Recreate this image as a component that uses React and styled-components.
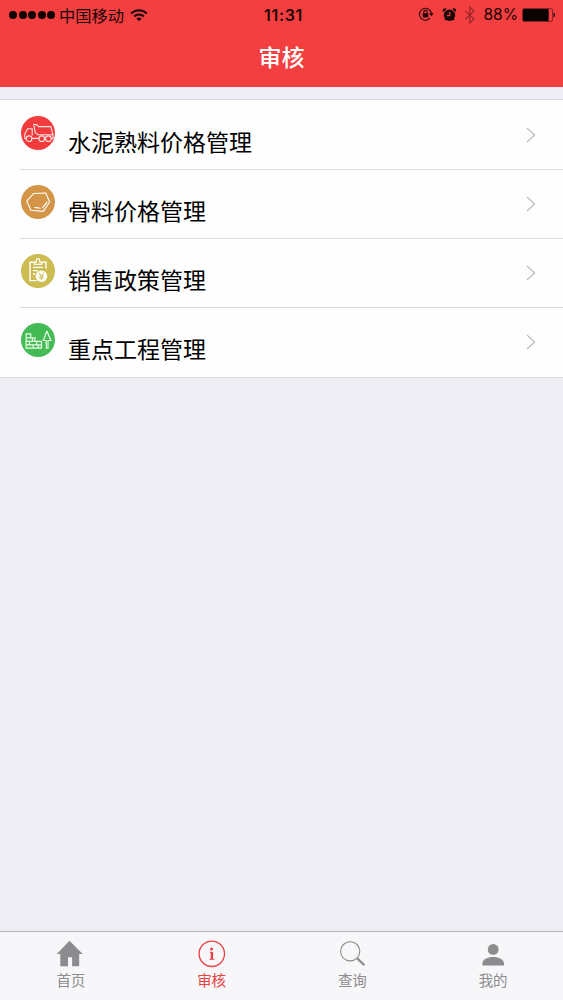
import React from "react";
import styled, { createGlobalStyle } from "styled-components";

const MENU = [
  { name: "水泥熟料价格管理", color: "#f13b3c", icon: <TruckIcon /> },
  { name: "骨料价格管理", color: "#d49548", icon: <StoneIcon /> },
  { name: "销售政策管理", color: "#cdbc51", icon: <PolicyIcon /> },
  { name: "重点工程管理", color: "#45bb55", icon: <ProjectIcon /> },
];

const TABS = [
  { name: "首页", icon: <HomeIcon /> },
  { name: "审核", icon: <InfoIcon />, active: true },
  { name: "查询", icon: <SearchIcon /> },
  { name: "我的", icon: <UserIcon /> },
];

const App = () => {
  return (
    <React.Fragment>
      <GlobalStyle />
      <Page>
        <Header>
          <StatusBar>
            <StatusLeft>
              <Signal>
                <Dot /><Dot /><Dot /><Dot /><Dot />
              </Signal>
              <Carrier>中国移动</Carrier>
              <WifiIcon />
            </StatusLeft>
            <Clock>11:31</Clock>
            <StatusRight>
              <LockIcon />
              <AlarmIcon />
              <BluetoothIcon />
              <Percent>88%</Percent>
              <BatteryIcon />
            </StatusRight>
          </StatusBar>
          <Title>审核</Title>
        </Header>
        <List>
          {MENU.map((item) => (
            <Row key={item.name}>
              <Round $color={item.color}>{item.icon}</Round>
              <RowBody>
                <RowName>{item.name}</RowName>
                <ArrowIcon />
              </RowBody>
            </Row>
          ))}
        </List>
        <TabBar>
          {TABS.map((tab) => (
            <Tab key={tab.name} $active={tab.active}>
              <TabIcon>{tab.icon}</TabIcon>
              <TabName>{tab.name}</TabName>
            </Tab>
          ))}
        </TabBar>
      </Page>
    </React.Fragment>
  );
};

// status bar icons

function WifiIcon() {
  return (
    <svg width="18" height="14" viewBox="0 0 18 14" fill="none" stroke="#1b0606" strokeWidth="2.1">
      <path d="M1.2 5.4C5.6 1.1 12.4 1.1 16.8 5.4" />
      <path d="M4.2 8.4C6.9 5.8 11.1 5.8 13.8 8.4" />
      <path d="M9 13.2 6.4 10.5C7.8 9.1 10.2 9.1 11.6 10.5Z" fill="#1b0606" stroke="none" />
    </svg>
  );
}

function LockIcon() {
  return (
    <svg width="16" height="15" viewBox="0 0 16 15" fill="none" stroke="#250707" strokeWidth="1.1">
      <path d="M12 11.2A6 6 0 1 1 13.4 6.6" />
      <path d="M11.1 6.2H15.7L13.4 9.2Z" fill="#250707" stroke="none" />
      <rect x="4.7" y="6.2" width="5.6" height="4.3" rx=".4" fill="#250707" stroke="none" />
      <path d="M5.8 6.5V5.1A1.7 1.7 0 0 1 9.2 5.1V6.5" />
    </svg>
  );
}

function AlarmIcon() {
  return (
    <svg width="14" height="14" viewBox="0 0 14 14" fill="#1b0606">
      <circle cx="7.5" cy="7.3" r="5.7" />
      <path d="M1.3 4A2.2 2.2 0 0 1 4.7 1.1ZM13.7 4A2.2 2.2 0 0 0 10.3 1.1Z" />
      <path d="M3.8 10.6 3 12.3M11.2 10.6 12 12.3" stroke="#1b0606" strokeWidth="1.2" />
      <path d="M7.7 3.9V7.7H4.8" fill="none" stroke="#f33f40" strokeWidth="1.3" />
    </svg>
  );
}

function BluetoothIcon() {
  return (
    <svg width="11" height="18" viewBox="0 0 11 18" fill="none" stroke="#9b2527" strokeWidth="1.2">
      <path d="M1.2 4.8 10.2 13 5.8 16.8V1.2L10.2 5 1.2 13.2" />
    </svg>
  );
}

function BatteryIcon() {
  return (
    <svg width="34" height="14" viewBox="0 0 34 14">
      <rect x=".5" y=".5" width="30" height="13" rx="1.8" fill="none" stroke="#7d1d1e" strokeWidth=".9" />
      <rect x="1" y="1" width="25.7" height="12" rx="1" fill="#080101" />
      <path d="M31.5 4.6C33.6 5.2 33.6 8.8 31.5 9.4Z" fill="#250707" />
    </svg>
  );
}

// list icons

function TruckIcon() {
  return (
    <svg width="34" height="34" viewBox="0 0 34 34" fill="none" stroke="#ffe3e3" strokeWidth="1.1">
      <path d="M5.2 22.4H3.8V18L6.6 12.7H11.2V19.4M12 8.6H15.6L17.6 10.6H29.8L32 18.7M13 9.6 14.3 16.8 17 18.7H32V22.4H30.4M11 22.4H17.8" />
      <circle cx="8.1" cy="22.7" r="2.8" />
      <circle cx="20.8" cy="22.7" r="2.8" />
      <circle cx="27.4" cy="22.7" r="2.8" />
    </svg>
  );
}

function StoneIcon() {
  return (
    <svg width="34" height="34" viewBox="0 0 34 34" fill="none" stroke="#fff" strokeWidth="1.1">
      <path d="M12.6 8.5 24.8 8 28.6 17 22.2 26.4 9.9 25.3 5.8 16.1Z" />
      <path d="M26.2 16.7 21.4 23.2M19.6 23.2 13.5 22.4" />
    </svg>
  );
}

function PolicyIcon() {
  return (
    <svg width="34" height="34" viewBox="0 0 34 34" fill="none" stroke="#fff" strokeWidth="1.4">
      <path d="M13 8.2H9V26.6H15.5M21.2 8.2H25V14.5" />
      <path d="M13.4 10.3V8.1H15.3V6.4A1.7 1.7 0 0 1 18.7 6.4V8.1H20.6V10.3Z" strokeWidth="1.2" />
      <path d="M12 13.4H22.2M12 16.6H17M12 20H14" />
      <circle cx="20.4" cy="22.2" r="5.8" fill="#fff" stroke="none" />
      <path d="M17.8 18.7 20.4 22 23 18.7M20.4 21.8V26M18 22.2H22.8M18 24.2H22.8" stroke="#cdbc51" strokeWidth="1" />
    </svg>
  );
}

function ProjectIcon() {
  return (
    <svg width="34" height="34" viewBox="0 0 34 34" fill="none" stroke="#e9ffe8" strokeWidth="1.15">
      <path d="M5.1 10.9H9.7V14.9H14V18.4H20.5V25.1H5.1ZM5.1 14.9H9.7M5.1 18.4H14M5.1 21.8H20.5M11.4 14.9V18.4M8.5 18.4V21.8M15.7 18.4V21.8M12.1 21.8V25.1M17.2 21.8V25.1" />
      <path d="M25.9 8 22.3 17.5H25.1V21M25.9 8 29.9 17.5H27V25.2H25.3V21" />
    </svg>
  );
}

function ArrowIcon() {
  return (
    <svg width="10" height="16" viewBox="0 0 10 16" fill="none" stroke="#bdbdc2" strokeWidth="1.3">
      <path d="M1 1 8.6 8 1 15" />
    </svg>
  );
}

// tab icons

function HomeIcon() {
  return (
    <svg width="28" height="28" viewBox="0 0 28 28" fill="#8c8c8e">
      <path d="M13.5.8 26.8 13.9H23.2V26.2H16.1V17.3H12V26.2H4.3V13.9H.8Z" />
    </svg>
  );
}

function InfoIcon() {
  return (
    <svg width="28" height="28" viewBox="0 0 28 28" fill="none" stroke="#e94043">
      <circle cx="14.8" cy="13.8" r="12.7" strokeWidth="1.3" />
      <circle cx="14.6" cy="9" r="1.5" fill="#e94043" stroke="none" />
      <path d="M14.9 12V19" strokeWidth="2.3" />
      <path d="M12.7 12.3H15.3M12.5 19.3H17.3" strokeWidth="1.1" />
    </svg>
  );
}

function SearchIcon() {
  return (
    <svg width="28" height="28" viewBox="0 0 28 28" fill="none" stroke="#8c8c8e">
      <circle cx="12.2" cy="11.3" r="9.6" strokeWidth="1.1" />
      <path d="M19 18.1 26.4 25.3" strokeWidth="2.2" />
    </svg>
  );
}

function UserIcon() {
  return (
    <svg width="28" height="28" viewBox="0 0 28 28" fill="#8c8c8e">
      <circle cx="14.2" cy="9.4" r="5.4" />
      <path d="M3.4 25.4V23.4C3.4 19.2 8.8 16.9 14.2 16.9S25 19.2 25 23.4V25.4Z" />
    </svg>
  );
}

const GlobalStyle = createGlobalStyle`
  * {
    box-sizing: border-box;
  }
  body {
    margin: 0;
    font-family: "Liberation Sans", "Noto Sans CJK SC", sans-serif;
  }
  svg {
    display: block;
    flex: none;
  }
`;

const Page = styled.div`
  display: flex;
  flex-direction: column;
  height: 1000px;
  background: #efeef4;
`;

const Header = styled.header`
  height: 87px;
  background: #f33f40;
`;

const StatusBar = styled.div`
  display: grid;
  grid-template-columns: 1fr 60px 1fr;
  align-items: center;
  height: 28px;
  padding: 0 7px 0 9px;
  color: #1b0606;
`;

const StatusLeft = styled.div`
  display: flex;
  align-items: center;
`;

const Signal = styled.div`
  display: flex;
  gap: 1.5px;
  margin-right: 4px;
`;

const Dot = styled.span`
  width: 8px;
  height: 8px;
  border-radius: 50%;
  background: #100202;
`;

const Carrier = styled.span`
  margin-right: 6px;
  font-family: "Noto Sans CJK SC", sans-serif;
  font-size: 16.3px;
  line-height: 26px;
`;

const Clock = styled.div`
  padding-left: 2px;
  font-family: Inter, sans-serif;
  font-size: 16px;
  font-weight: 600;
  letter-spacing: 0.7px;
  line-height: 28px;
  text-align: center;
`;

const StatusRight = styled.div`
  display: flex;
  align-items: center;
  justify-content: flex-end;
  gap: 8px;
`;

const Percent = styled.span`
  margin-right: -4px;
  padding-top: 1px;
  font-family: Inter, sans-serif;
  font-size: 15.6px;
  line-height: 28px;
`;

const Title = styled.h1`
  margin: 0;
  color: #fff;
  font-family: "Noto Sans CJK SC", sans-serif;
  font-size: 23px;
  font-weight: 500;
  line-height: 56px;
  text-align: center;
`;

const List = styled.ul`
  margin: 12px 0 0;
  padding: 1px 0 0;
  border-top: 1px solid #d9d9dc;
  border-bottom: 1px solid #d9d9dc;
  background: #fefefe;
  list-style: none;
`;

const Row = styled.li`
  display: flex;
  height: 69px;
  padding-left: 20px;
`;

const Round = styled.div`
  display: flex;
  align-items: center;
  justify-content: center;
  width: 34.6px;
  height: 34.6px;
  margin: 14.7px 0 0 0.6px;
  border-radius: 50%;
  background: ${(props) => props.$color};
`;

const RowBody = styled.div`
  display: flex;
  flex: 1;
  justify-content: space-between;
  align-items: center;
  margin-left: -35.2px;
  padding: 0 27px 0 48px;
  border-bottom: 1px solid #dbdbde;
  ${Row}:last-child & {
    border-color: transparent;
  }
`;

const RowName = styled.span`
  padding-top: 12px;
  color: #000;
  font-family: "Noto Sans CJK SC", sans-serif;
  font-size: 23px;
  line-height: 34px;
`;

const TabBar = styled.nav`
  display: flex;
  height: 69px;
  margin-top: auto;
  border-top: 1px solid #b4b3b8;
  background: #f7f6f8;
`;

const Tab = styled.div`
  display: flex;
  flex: 1;
  flex-direction: column;
  align-items: center;
  padding-top: 8px;
  color: ${(props) => (props.$active ? "#e94043" : "#8c8c8e")};
`;

const TabIcon = styled.div`
  height: 28px;
`;

const TabName = styled.span`
  padding-left: 1px;
  font-family: "Noto Sans CJK SC", sans-serif;
  font-size: 14.5px;
  line-height: 24px;
`;

export default App;
